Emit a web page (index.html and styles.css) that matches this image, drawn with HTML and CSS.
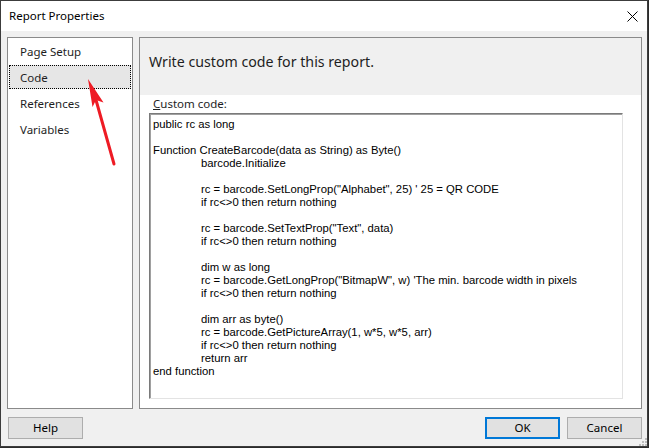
FILE: index.html
```html
<!DOCTYPE html>
<html lang="en">
<head>
  <meta charset="UTF-8" />
  <title>Report Properties</title>
  <link rel="stylesheet" href="styles.css">
</head>
<body>
  <div class="window">
    <div class="titlebar">
      <span class="title">Report Properties</span>
      <svg class="close" width="11" height="11" viewBox="0 0 11 11">
        <path d="M0.5 0.5 L10.5 10.5 M10.5 0.5 L0.5 10.5" stroke="#000" stroke-width="1" fill="none" />
      </svg>
    </div>
    <div class="content">
      <div class="main">
        <ul class="nav">
          <li>Page Setup</li>
          <li class="selected">Code</li>
          <li>References</li>
          <li>Variables</li>
        </ul>
        <div class="panel">
          <div class="panel-head">Write custom code for this report.</div>
          <div class="panel-body">
            <div class="code-label"><u>C</u>ustom code:</div>
<pre class="code">public rc as long

Function CreateBarcode(data as String) as Byte()
	barcode.Initialize

	rc = barcode.SetLongProp("Alphabet", 25) ' 25 = QR CODE
	if rc&lt;&gt;0 then return nothing

	rc = barcode.SetTextProp("Text", data)
	if rc&lt;&gt;0 then return nothing

	dim w as long
	rc = barcode.GetLongProp("BitmapW", w) 'The min. barcode width in pixels
	if rc&lt;&gt;0 then return nothing

	dim arr as byte()
	rc = barcode.GetPictureArray(1, w*5, w*5, arr)
	if rc&lt;&gt;0 then return nothing
	return arr
end function</pre>
          </div>
        </div>
      </div>
      <div class="buttons">
        <button class="btn help">Help</button>
        <button class="btn btn-default">OK</button>
        <button class="btn">Cancel</button>
      </div>
      <svg class="grip" width="9" height="9" viewBox="0 0 9 9">
        <rect x="7" y="1" width="2" height="2" fill="#bcbcbc" />
        <rect x="4" y="4" width="2" height="2" fill="#bcbcbc" />
        <rect x="7" y="4" width="2" height="2" fill="#bcbcbc" />
        <rect x="1" y="7" width="2" height="2" fill="#bcbcbc" />
        <rect x="4" y="7" width="2" height="2" fill="#bcbcbc" />
        <rect x="7" y="7" width="2" height="2" fill="#bcbcbc" />
      </svg>
    </div>
    <!-- annotation arrow pointing at the Code tab -->
    <svg class="arrow" width="40" height="100" viewBox="80 72 40 100">
      <line x1="96" y1="100" x2="114" y2="164" stroke="#ee1b24" stroke-width="3" stroke-linecap="round" />
      <path d="M88 79 L103.5 102.5 L96 100 L92.5 107 Z" fill="#ee1b24" />
    </svg>
  </div>
</body>
</html>
```

FILE: styles.css
```css
html, body {
  margin: 0;
  background: #2b2b2b;
}
body {
  font-family: "Noto Sans", "Open Sans", sans-serif;
  font-size: 11.5px;
  color: #000;
}
.window {
  position: relative;
  box-sizing: border-box;
  width: 648px;
  height: 447px;
  border: 1px solid #3c3c3c;
  background: #f0f0f0;
  display: flex;
  flex-direction: column;
}
.titlebar {
  height: 30px;
  background: #fff;
  display: flex;
  align-items: center;
  justify-content: space-between;
  padding: 0 9px 0 8px;
}
.title {
  font-size: 11.5px;
  margin-top: -1px;
}
.close {
  display: block;
}
.content {
  position: relative;
  flex: 1;
  padding: 6px 5px 0 6px;
}
.main {
  display: flex;
  gap: 6px;
  height: 372px;
}
.nav {
  box-sizing: border-box;
  width: 126px;
  margin: 0;
  padding: 1px 0 0 1px;
  list-style: none;
  background: #fff;
  border: 1px solid #8a8a8a;
}
.nav li {
  box-sizing: border-box;
  height: 24px;
  width: 122px;
  margin: 0 0 2px;
  padding: 1px 0 0 10px;
  line-height: 21px;
  border: 1px dotted transparent;
  color: #1e1e1e;
}
.nav li.selected {
  background: #e6e6e6;
  border-color: #000;
}
.panel {
  box-sizing: border-box;
  width: 503px;
  background: #fff;
  border: 1px solid #8a8a8a;
  display: flex;
  flex-direction: column;
}
.panel-head {
  height: 57px;
  background: #f0f0f0;
  padding: 14px 0 0 9px;
  box-sizing: border-box;
  font-size: 14.2px;
  color: #1e1e1e;
}
.panel-body {
  flex: 1;
  padding: 0 0 0 9px;
}
.code-label {
  height: 18px;
  padding: 1px 0 0 4px;
  box-sizing: border-box;
  color: #1e1e1e;
}
.code {
  box-sizing: border-box;
  width: 474px;
  height: 286px;
  margin: 0;
  padding: 4px 3px;
  background: #fff;
  border: 1px solid;
  border-color: #7a7a7a #e3e3e3 #e3e3e3 #7a7a7a;
  box-shadow: inset 1px 1px 0 #a0a0a0;
  font-family: "Liberation Sans", Arial, sans-serif;
  font-size: 11.3px;
  line-height: 13px;
  tab-size: 48px;
  white-space: pre;
  overflow: hidden;
}
.buttons {
  display: flex;
  gap: 7px;
  margin-top: 8px;
  padding-left: 1px;
}
.btn {
  box-sizing: border-box;
  width: 75px;
  height: 22px;
  padding: 0 0 1px;
  background: #e1e1e1;
  border: 1px solid #adadad;
  font-family: "Noto Sans", "Open Sans", sans-serif;
  font-size: 11.5px;
  color: #000;
}
.help {
  margin-right: auto;
}
.btn-default {
  border: 2px solid #0078d7;
}
.grip {
  position: absolute;
  right: 0;
  bottom: 0;
}
.arrow {
  position: absolute;
  left: 79px;
  top: 71px;
}
```
